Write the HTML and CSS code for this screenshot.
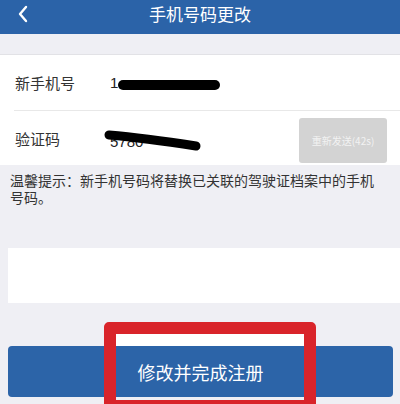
FILE: index.html
```html
<!DOCTYPE html>
<html lang="zh-CN">
<head>
    <meta charset="UTF-8">
    <meta name="viewport" content="width=device-width, initial-scale=1.0">
    <title>手机号码更改</title>
    <link rel="stylesheet" href="styles.css">
</head>
<body>
    <header class="nav-bar">
        <span class="back">
            <svg width="12" height="18" viewBox="0 0 12 18"><path d="M9 2 L3 9 L9 16" fill="none" stroke="#fff" stroke-width="2.4" stroke-linecap="round" stroke-linejoin="round"/></svg>
        </span>
        <h1>手机号码更改</h1>
    </header>

    <div class="gap"></div>

    <div class="form-card">
        <div class="form-row">
            <span class="label">新手机号</span>
            <span class="value">
                1<span class="mask">3800000000</span>
                <svg class="redact redact-1" width="112" height="16" viewBox="0 0 112 16"><path d="M13 8 L105 8" stroke="#000" stroke-width="10" stroke-linecap="round"/></svg>
            </span>
        </div>
        <div class="form-row">
            <span class="label">验证码</span>
            <span class="value value-code">
                5780<span class="mask">00</span>
                <svg class="redact redact-2" width="104" height="30" viewBox="0 0 104 30"><path d="M5 10 Q40 13 92 21" fill="none" stroke="#000" stroke-width="9" stroke-linecap="round"/></svg>
            </span>
            <button class="resend" disabled>重新发送(42s)</button>
        </div>
    </div>

    <p class="tip">温馨提示：新手机号码将替换已关联的驾驶证档案中的手机号码。</p>

    <div class="blank-box"></div>

    <div class="submit-wrap">
        <button class="submit">修改并完成注册</button>
        <div class="highlight"></div>
    </div>
</body>
</html>
```

FILE: styles.css
```css
body {
    margin: 0;
    width: 400px;
    height: 404px;
    overflow: hidden;
    background-color: #efeff4;
    font-family: 'Noto Sans CJK SC', 'Noto Sans', sans-serif;
    color: #333;
}

.nav-bar {
    position: relative;
    height: 34px;
    background-color: #2b63a8;
    display: flex;
    align-items: center;
    justify-content: center;
}

.nav-bar h1 {
    margin: 0;
    font-size: 17px;
    font-weight: normal;
    color: #fff;
    line-height: 28px;
    margin-top: -6px;
}

.back {
    position: absolute;
    left: 17px;
    top: 4px;
}

.gap {
    height: 20px;
    border-bottom: 1px solid #e2e2e6;
}

.form-card {
    background-color: #fff;
}

.form-row {
    display: flex;
    align-items: center;
    height: 55px;
    padding-left: 15px;
}

.form-row + .form-row {
    height: 54px;
    border-top: 1px solid #e8e8e8;
    margin-left: 14px;
    padding-left: 1px;
}

.label {
    width: 95px;
    font-size: 15px;
    color: #333;
}

.value {
    position: relative;
    flex: 1;
    font-size: 15px;
    line-height: 17px;
    font-family: 'Liberation Sans', sans-serif;
    color: #222;
}

.value-code {
    margin-top: 6px;
}

.mask {
    color: transparent;
}

.redact {
    position: absolute;
    left: 0;
    top: 0;
}

.redact-1 {
    top: 3px;
}

.redact-2 {
    left: -6px;
    top: -8px;
}

.resend {
    width: 88px;
    height: 45px;
    margin-right: 13px;
    margin-top: 5px;
    border: none;
    border-radius: 3px;
    background-color: #d3d3d3;
    color: #f2f2f2;
    font-size: 10px;
    font-family: 'Noto Sans CJK SC', sans-serif;
    padding: 0;
}

.tip {
    margin: 0;
    padding: 7px 20px 0 10px;
    font-size: 14px;
    line-height: 17px;
    color: #333;
    height: 83px;
    box-sizing: border-box;
}

.blank-box {
    height: 55px;
    margin-left: 8px;
    background-color: #fff;
}

.submit-wrap {
    position: relative;
    padding: 43px 7px 0 8px;
}

.submit {
    width: 100%;
    height: 51px;
    border: none;
    border-radius: 4px;
    background-color: #2c64a8;
    color: #fff;
    font-size: 18px;
    font-family: 'Noto Sans CJK SC', sans-serif;
}

.highlight {
    position: absolute;
    left: 104px;
    top: 19px;
    width: 212px;
    height: 90px;
    box-sizing: border-box;
    border: 12px solid #d9242a;
    border-radius: 5px;
    background: linear-gradient(#fff 0 12px, transparent 12px);
}
```
